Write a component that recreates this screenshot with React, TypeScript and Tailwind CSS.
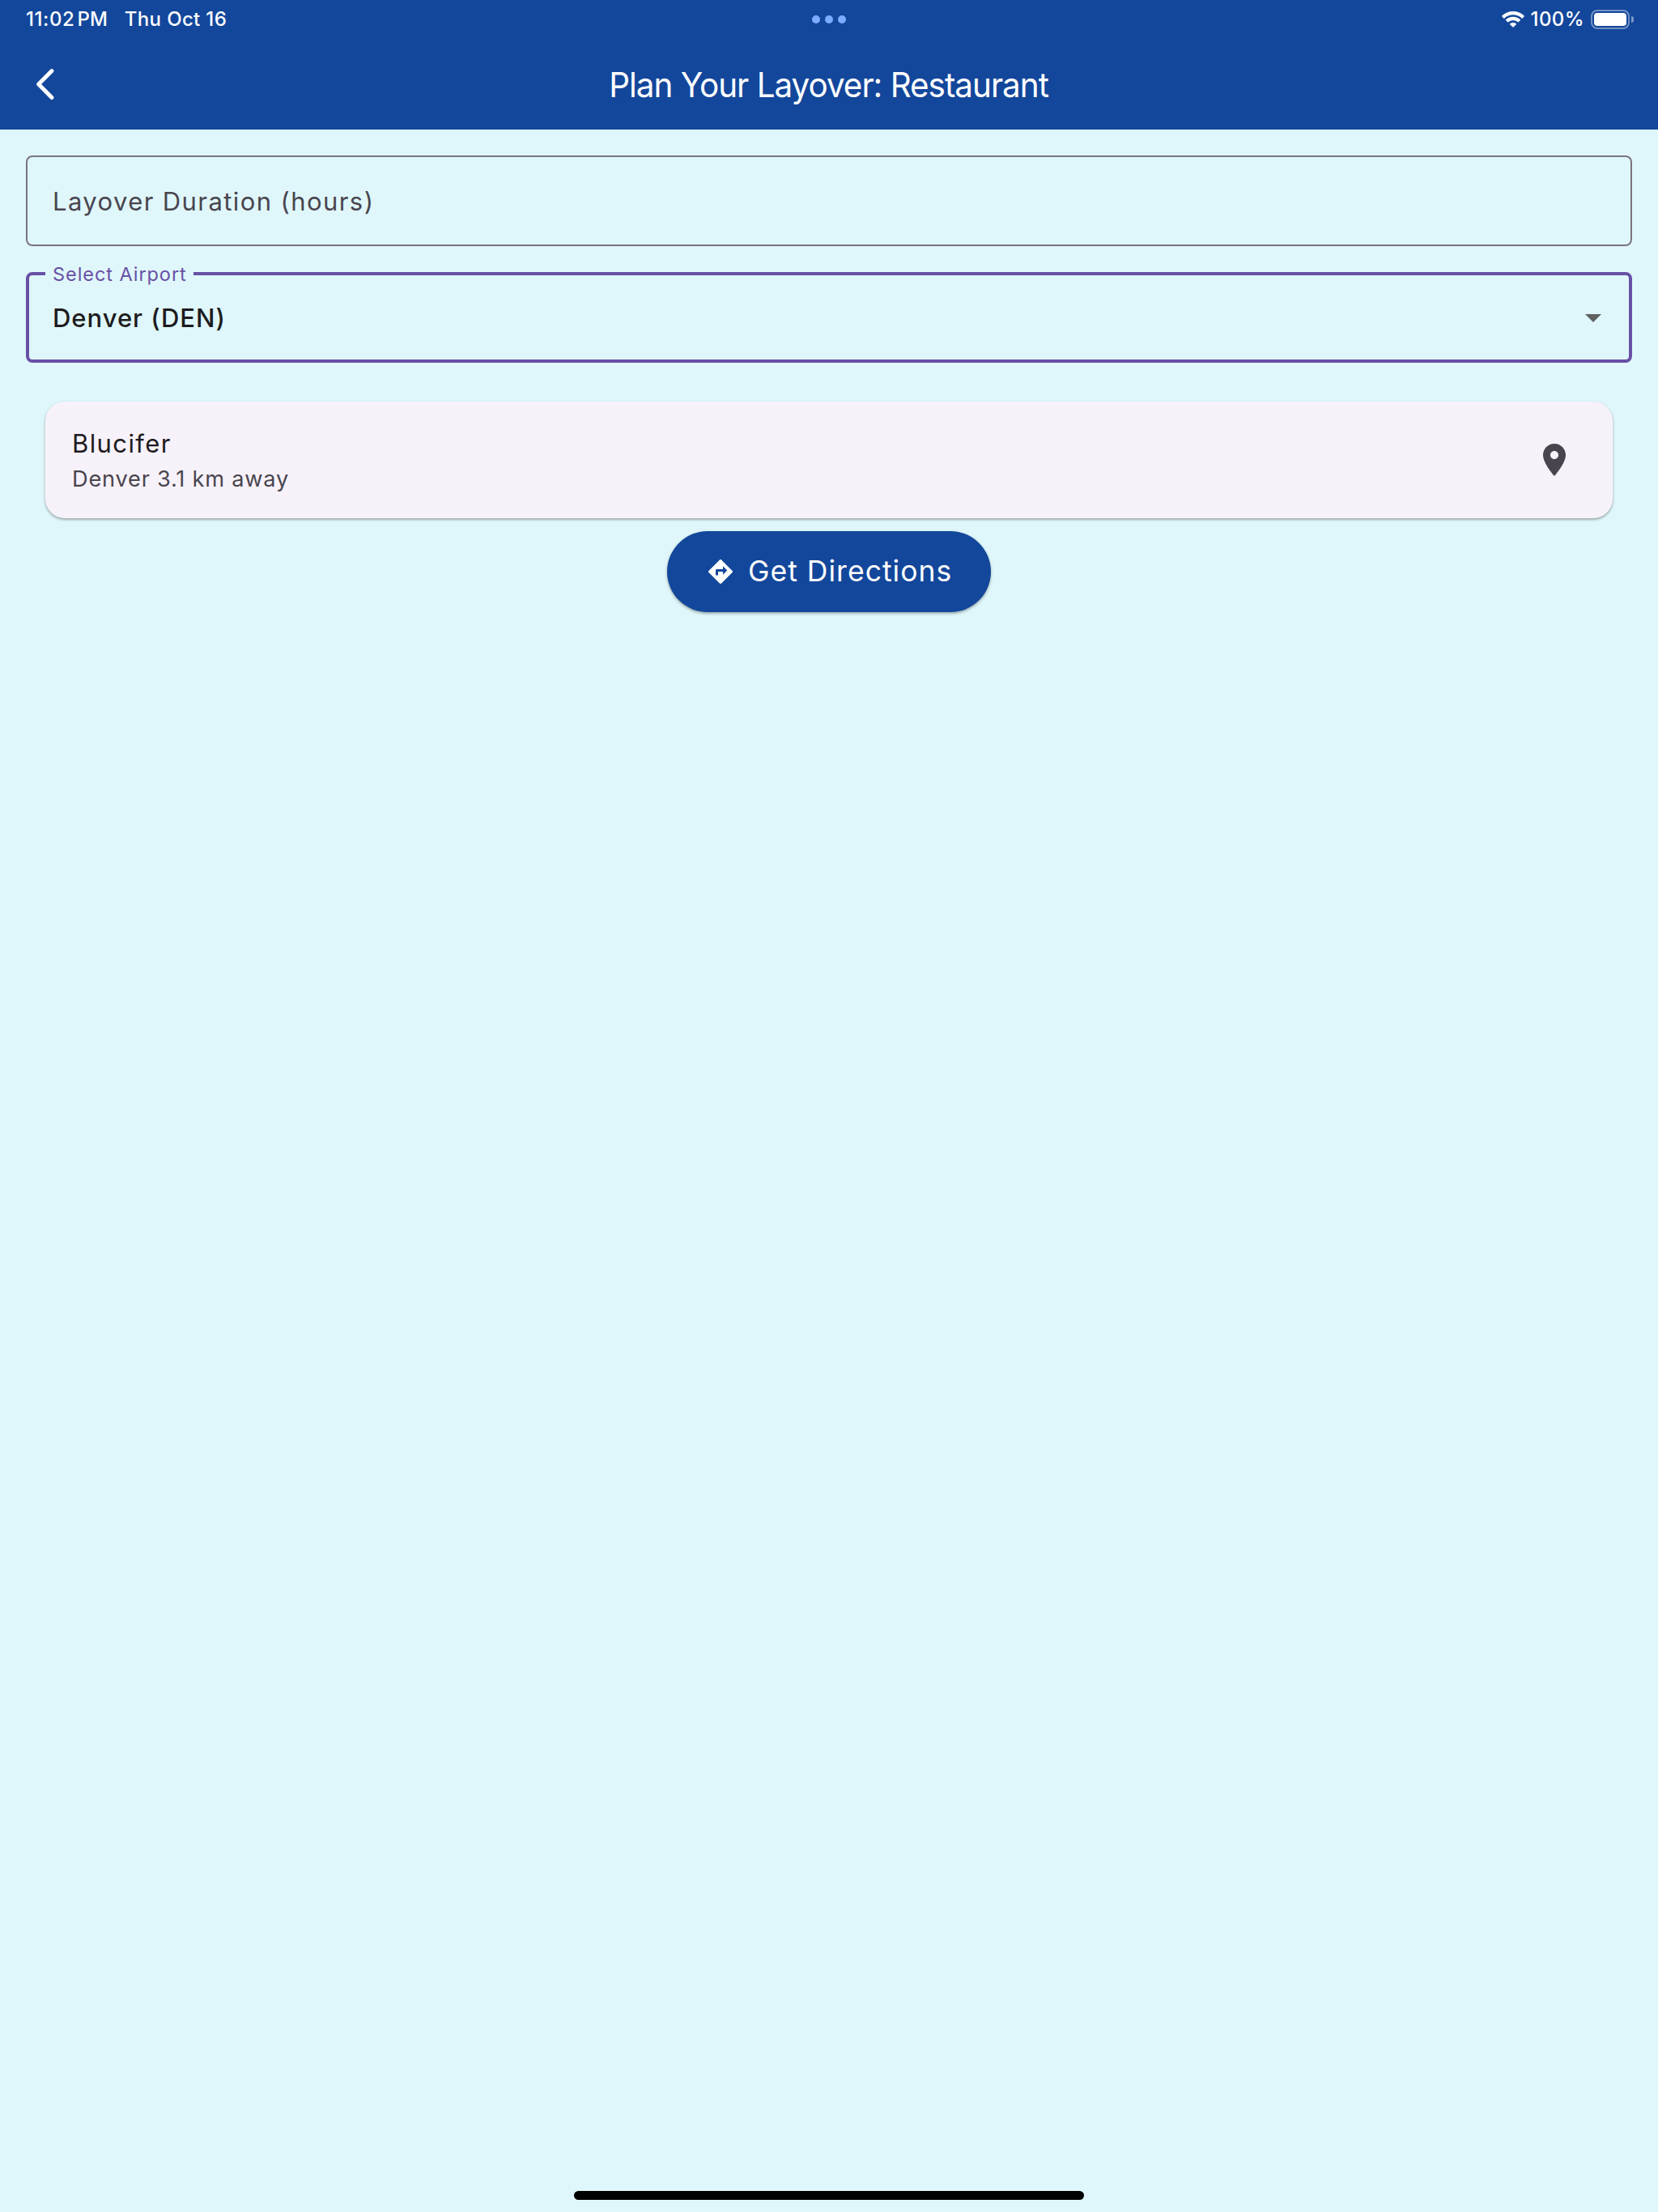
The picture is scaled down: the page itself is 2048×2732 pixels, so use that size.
import type { ReactNode } from "react";

function WifiIcon() {
  return (
    <svg className="h-5 w-7" viewBox="0 0 28 20" fill="none" stroke="white" strokeWidth="4.2">
      <path d="M1.4 7.4A17.8 17.8 0 0 1 26.6 7.4" />
      <path d="M6.1 12.1A11.2 11.2 0 0 1 21.9 12.1" />
      <path d="M14 19.6L10 15.7A5.9 5.9 0 0 1 18 15.7Z" fill="white" stroke="white" strokeWidth="0.6" strokeLinejoin="round" />
    </svg>
  );
}

function Battery() {
  return (
    <div className="flex items-center gap-[2px]">
      <div className="h-6 w-12 rounded-[8px] border-2 border-white/40 p-[2px]">
        <div className="h-full w-full rounded-[4px] bg-white" />
      </div>
      <div className="h-2 w-[3px] rounded-r-full bg-white/45" />
    </div>
  );
}

function StatusBar() {
  return (
    <div className="grid h-12 grid-cols-3 items-center text-[24px] leading-none font-medium text-white">
      <div className="flex items-center pl-8">
        <span className="tracking-[0.6px]">11:02</span>
        <span className="ml-[3px]">PM</span>
        <span className="ml-[21px] tracking-[0.35px]">Thu Oct 16</span>
      </div>
      <div className="flex justify-center gap-[6px]">
        <span className="h-[10px] w-[10px] rounded-full bg-[#7cacff]" />
        <span className="h-[10px] w-[10px] rounded-full bg-[#7cacff]" />
        <span className="h-[10px] w-[10px] rounded-full bg-[#7cacff]" />
      </div>
      <div className="flex items-center justify-end pr-[30px]">
        <WifiIcon />
        <span className="ml-2 tracking-[0.4px]">100%</span>
        <div className="ml-[8px]">
          <Battery />
        </div>
      </div>
    </div>
  );
}

function AppBar() {
  return (
    <div className="grid h-28 grid-cols-[112px_1fr_112px] items-center text-white">
      <button className="flex items-center justify-center" aria-label="Back">
        <svg className="h-12 w-12" viewBox="0 0 48 48" fill="none" stroke="white" strokeWidth="5" strokeLinecap="round" strokeLinejoin="round">
          <path d="M32 7.6L15.6 24L32 40.4" />
        </svg>
      </button>
      <h1 className="scale-x-95 pt-[2px] pr-[1px] text-center text-[42.5px] leading-none font-normal tracking-[-1.04px]">
        Plan Your Layover: Restaurant
      </h1>
    </div>
  );
}

function PlaceCard({ name, detail, icon }: { name: string; detail: string; icon: ReactNode }) {
  return (
    <div className="mx-6 flex h-36 items-center justify-between rounded-[24px] bg-[#f7f2fa] pr-12 pl-[33px] shadow-[0_2px_3px_rgba(0,0,0,0.26),0_1px_5px_rgba(0,0,0,0.08)]">
      <div className="flex flex-col gap-[15px] pt-[1px]">
        <p className="text-[31px] leading-[31px] tracking-[1.4px] text-[#1d1b20]">{name}</p>
        <p className="text-[27.2px] leading-[28px] tracking-[0.78px] text-[#49454f]">{detail}</p>
      </div>
      {icon}
    </div>
  );
}

export default function App() {
  return (
    <div className="flex h-[2732px] w-[2048px] flex-col bg-[#dff7fa] font-[Inter,sans-serif]">
      <header className="bg-[#13479b]">
        <StatusBar />
        <AppBar />
      </header>

      <main className="flex flex-1 flex-col px-8 pt-8">
        <div className="flex h-28 items-center rounded-[8px] border-2 border-[#7b747e] px-[31px] pt-px">
          <span className="text-[31px] leading-none tracking-[1.41px] text-[#49454f]">Layover Duration (hours)</span>
        </div>

        <div className="relative mt-8 flex h-28 items-center justify-between rounded-[8px] border-4 border-[#6850a5] pr-5 pl-[29px]">
          <span className="absolute -top-[13px] left-[20px] bg-[#dff7fa] pr-2 pl-[9px] text-[23.5px] leading-[24px] tracking-[0.94px] text-[#6850a5]">
            Select Airport
          </span>
          <span className="pt-px text-[31px] leading-none font-medium tracking-[0.98px] text-[#1d1b20]">Denver (DEN)</span>
          <svg className="h-12 w-12" viewBox="0 0 24 24" fill="#616161">
            <path d="M7 10l5 5 5-5z" />
          </svg>
        </div>

        <div className="pt-12">
          <PlaceCard
            name="Blucifer"
            detail="Denver 3.1 km away"
            icon={
              <svg className="h-12 w-12" viewBox="0 0 24 24" fill="#49454f">
                <path d="M12 2C8.13 2 5 5.13 5 9c0 5.25 7 13 7 13s7-7.75 7-13c0-3.87-3.13-7-7-7zm0 9.5c-1.38 0-2.5-1.12-2.5-2.5s1.12-2.5 2.5-2.5 2.5 1.12 2.5 2.5-1.12 2.5-2.5 2.5z" />
              </svg>
            }
          />
        </div>

        <button className="mt-4 flex h-[100px] w-[400px] items-center gap-4 self-center rounded-full bg-[#13479b] pl-12 text-white shadow-[0_2px_3px_rgba(0,0,0,0.26),0_1px_5px_rgba(0,0,0,0.08)]">
          <svg className="h-9 w-9" viewBox="0 0 24 24" fill="white">
            <path d="M21.71 11.29l-9-9c-.39-.39-1.02-.39-1.41 0l-9 9c-.39.39-.39 1.02 0 1.41l9 9c.39.39 1.02.39 1.41 0l9-9c.39-.38.39-1.01 0-1.41zM14 14.5V12h-4v3H8v-4c0-.55.45-1 1-1h5V7.5l3.5 3.5-3.5 3.5z" />
          </svg>
          <span className="text-[35.5px] leading-none tracking-[1.02px]">Get Directions</span>
        </button>
      </main>

      <div className="mb-[15px] h-[11px] w-[630px] self-center rounded-full bg-black" />
    </div>
  );
}
